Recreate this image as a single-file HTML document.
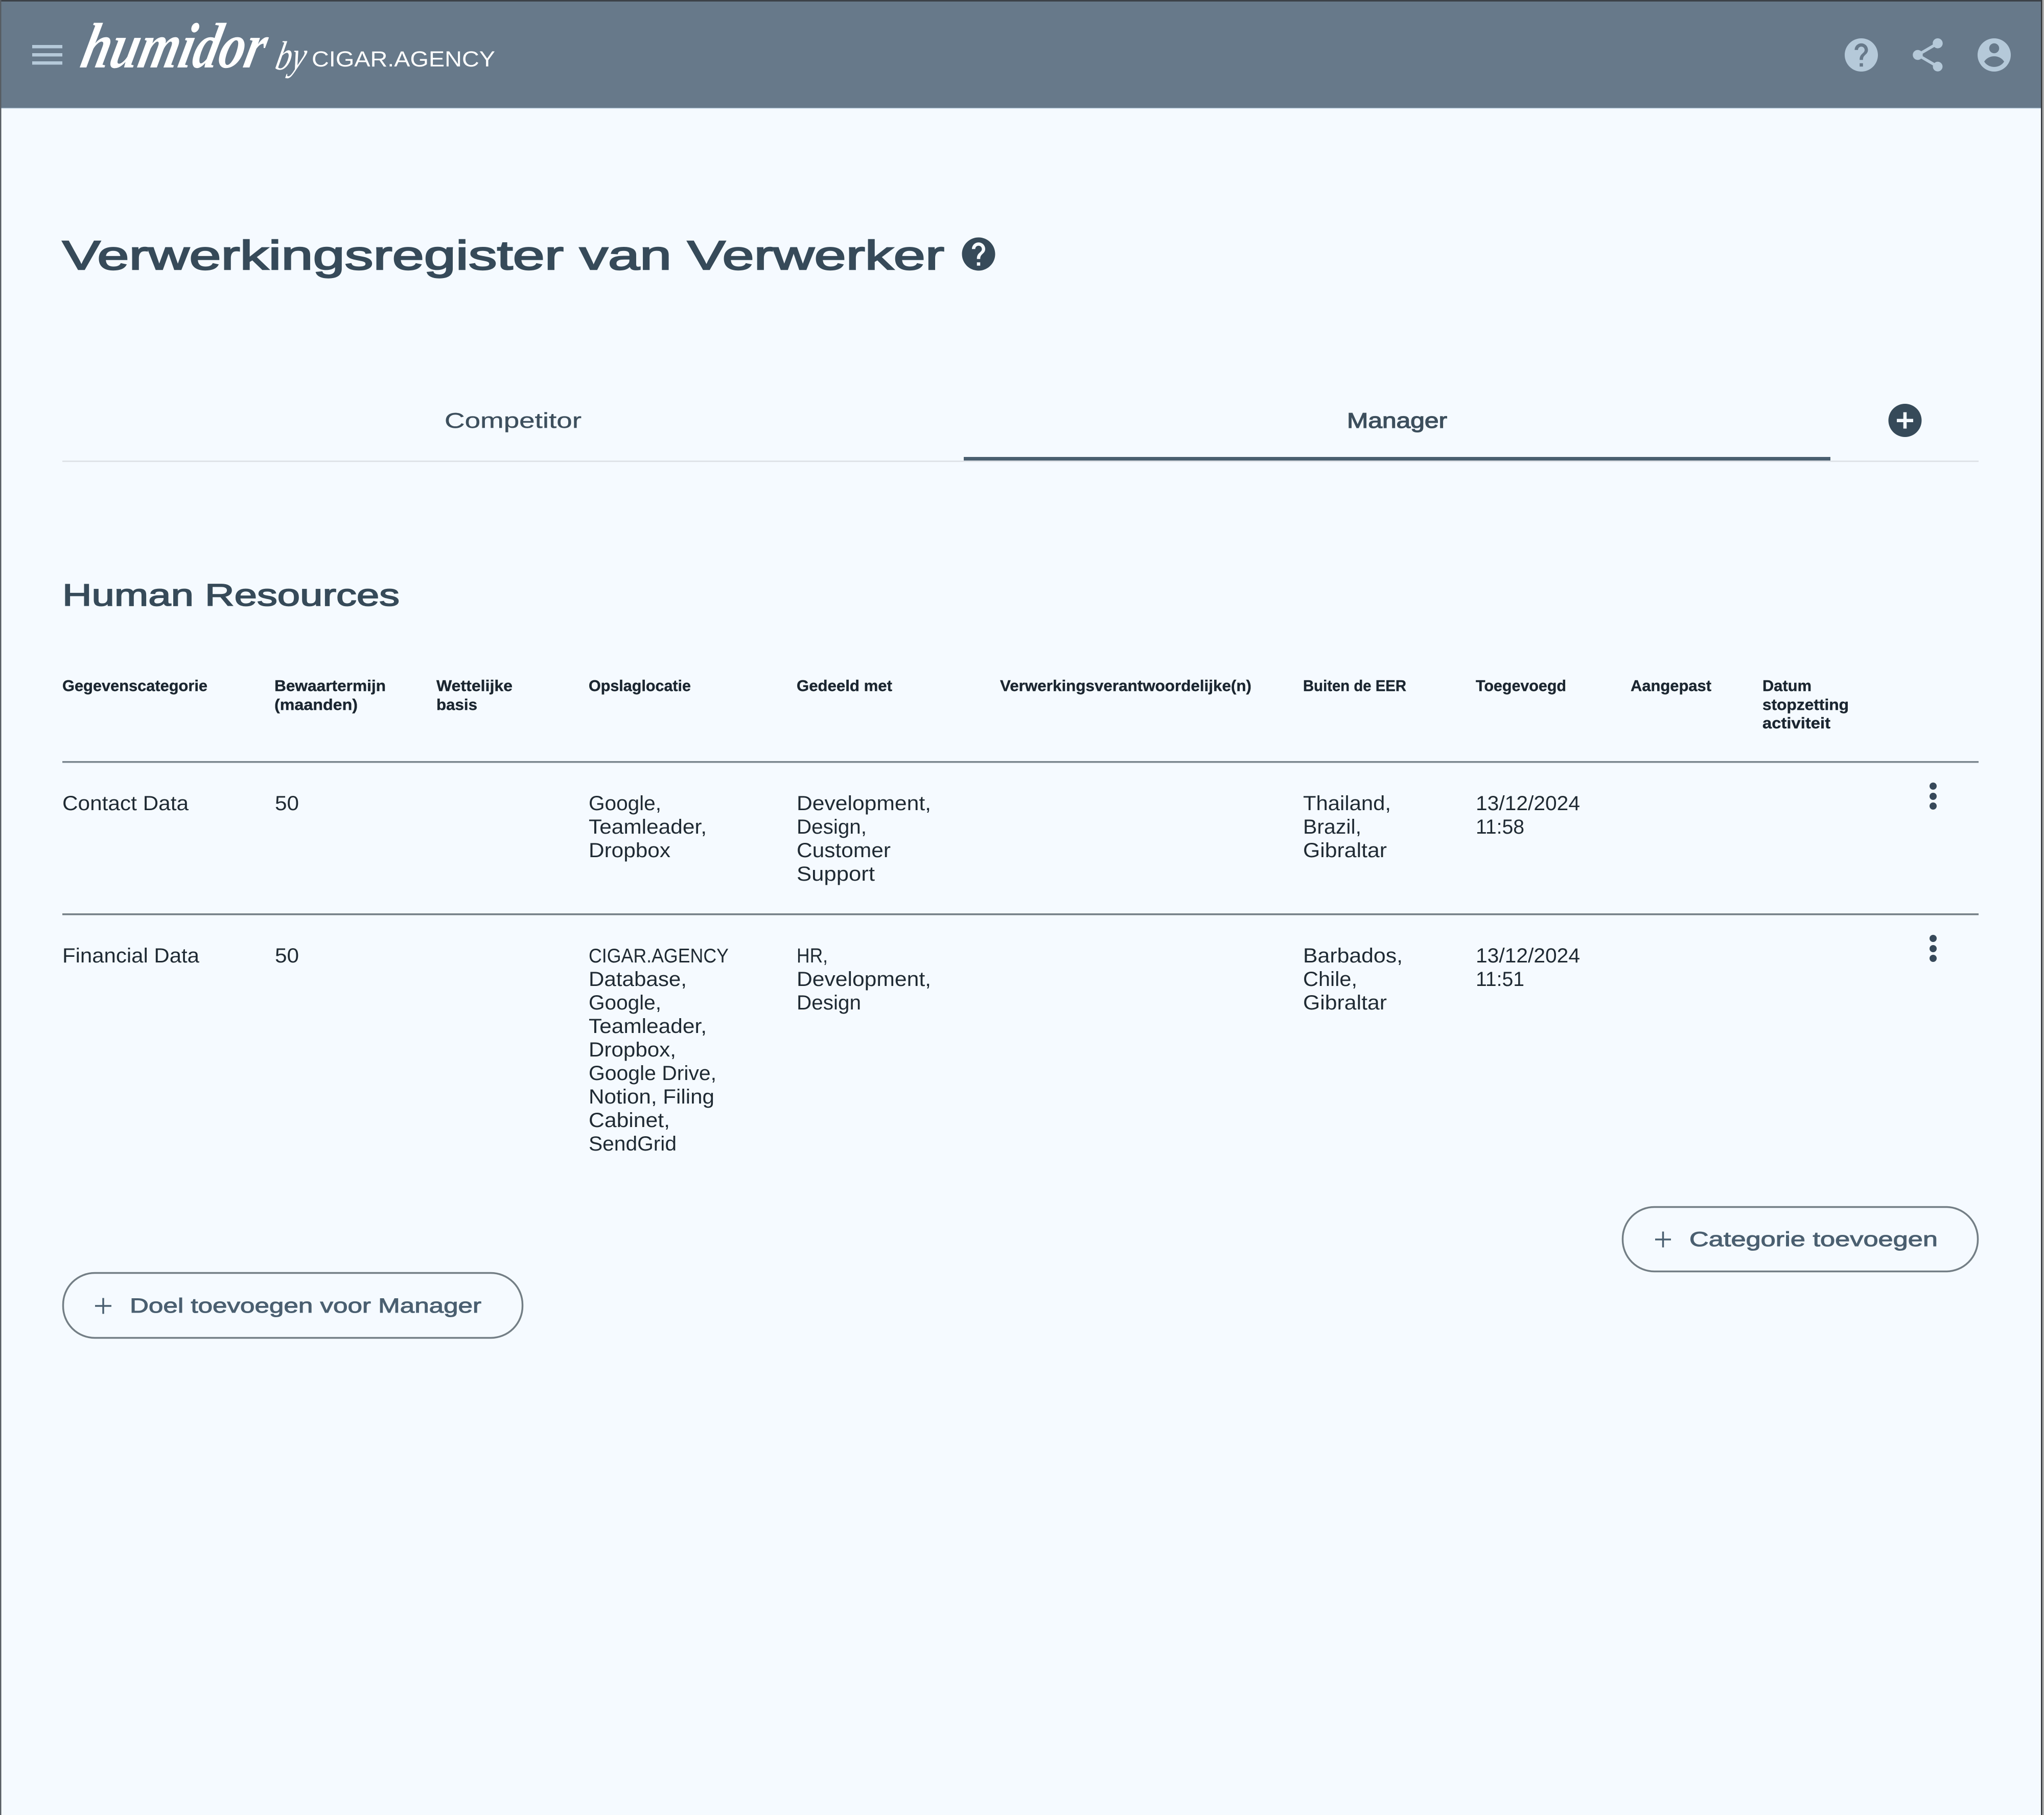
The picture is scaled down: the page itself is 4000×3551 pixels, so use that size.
<!DOCTYPE html>
<html lang="nl">
<head>
<meta charset="utf-8">
<title>Verwerkingsregister van Verwerker</title>
<style>
html,body{margin:0;padding:0;background:#f5faff;width:4000px;height:3551px;overflow:hidden}
svg{display:block}
text{font-family:"Liberation Sans",Arial,sans-serif;white-space:pre}
.th{font-size:31px;font-weight:700;fill:#1b2630;stroke:#1b2630;stroke-width:.4px}
.td{font-size:40px;fill:#1f2a33}
.btn{font-size:40px;fill:#4a5f70;stroke:#4a5f70;stroke-width:1px}
.pill{fill:none;stroke:#737e85;stroke-width:3.500px}
</style>
</head>
<body>
<svg width="4000" height="3551" viewBox="0 0 4000 3551" xmlns="http://www.w3.org/2000/svg">
  <rect width="4000" height="3551" fill="#f5faff"/>

  <!-- header -->
  <rect x="0" y="0" width="3994" height="211" fill="#67798a"/>
  <rect x="0" y="0" width="3994" height="3" fill="#3c4248"/>
  <rect x="0" y="211" width="3994" height="1.500" fill="#b5c9d9"/>
  <rect x="63" y="88" width="59" height="6.500" fill="#b5c9d9"/>
  <rect x="63" y="104" width="59" height="6.500" fill="#b5c9d9"/>
  <rect x="63" y="120" width="59" height="6.500" fill="#b5c9d9"/>

  <text transform="translate(154,132) skewX(-13)" style="font-family:'Liberation Serif',serif;font-size:126px;font-weight:700;font-style:italic" fill="#ffffff" textLength="358" lengthAdjust="spacingAndGlyphs">humidor</text>
  <text transform="translate(536,136) skewX(-12)" style="font-family:'Liberation Serif',serif;font-size:80px;font-style:italic" fill="#ffffff" textLength="58" lengthAdjust="spacingAndGlyphs">by</text>
  <text x="610" y="130" style="font-size:43px" fill="#ffffff" textLength="359" lengthAdjust="spacingAndGlyphs">CIGAR.AGENCY</text>

  <g fill="#b5c9d9">
    <path transform="translate(3603.500,68.500) scale(3.250)" d="M12 2C6.480 2 2 6.480 2 12s4.480 10 10 10 10-4.480 10-10S17.520 2 12 2zm1 17h-2v-2h2v2zm2.070-7.750l-.9.920C13.450 12.900 13 13.500 13 15h-2v-.5c0-1.100.45-2.100 1.170-2.830l1.240-1.260c.37-.36.59-.86.59-1.410 0-1.100-.9-2-2-2s-2 .9-2 2H8c0-2.210 1.790-4 4-4s4 1.790 4 4c0 .88-.36 1.680-.93 2.250z"/>
    <path transform="translate(3733.500,68.500) scale(3.250)" d="M18 16.080c-.76 0-1.440.3-1.960.77L8.910 12.700c.05-.23.09-.46.09-.7s-.04-.47-.09-.7l7.050-4.110c.54.5 1.250.81 2.040.81 1.660 0 3-1.340 3-3s-1.340-3-3-3-3 1.340-3 3c0 .24.04.47.09.7L8.040 9.810C7.500 9.310 6.790 9 6 9c-1.660 0-3 1.340-3 3s1.340 3 3 3c.79 0 1.500-.31 2.040-.81l7.120 4.160c-.05.21-.08.43-.08.65 0 1.610 1.310 2.920 2.920 2.920 1.610 0 2.920-1.310 2.920-2.920s-1.310-2.920-2.920-2.920z"/>
    <path transform="translate(3863.500,68.500) scale(3.250)" fill-rule="evenodd" d="M12 2a10 10 0 1 0 0 20a10 10 0 1 0 0-20zM12 5a3 3 0 1 1 0 6a3 3 0 1 1 0-6zM6 16c1.300-2.100 3.600-3.200 6-3.200s4.700 1.100 6 3.200c-1.300 2.100-3.600 3.200-6 3.200s-4.700-1.100-6-3.200z"/>
  </g>

  <!-- title -->
  <text x="122" y="527" style="font-size:80px" fill="#364a59" stroke="#364a59" stroke-width="2.400" textLength="1726" lengthAdjust="spacingAndGlyphs">Verwerkingsregister van Verwerker</text>
  <path fill="#364a59" transform="translate(1876,458) scale(3.250)" d="M12 2C6.480 2 2 6.480 2 12s4.480 10 10 10 10-4.480 10-10S17.520 2 12 2zm1 17h-2v-2h2v2zm2.070-7.750l-.9.920C13.450 12.900 13 13.500 13 15h-2v-.5c0-1.100.45-2.100 1.170-2.830l1.240-1.260c.37-.36.59-.86.59-1.410 0-1.100-.9-2-2-2s-2 .9-2 2H8c0-2.210 1.790-4 4-4s4 1.790 4 4c0 .88-.36 1.680-.93 2.250z"/>

  <!-- tabs -->
  <text x="870" y="837" style="font-size:42px" fill="#3d4f5d" stroke="#3d4f5d" stroke-width=".4" textLength="268" lengthAdjust="spacingAndGlyphs">Competitor</text>
  <text x="2636" y="837" style="font-size:42px" fill="#3d4f5d" stroke="#3d4f5d" stroke-width="1.300" textLength="196" lengthAdjust="spacingAndGlyphs">Manager</text>
  <rect x="122" y="901" width="3750" height="3" fill="#dfe3e8"/>
  <rect x="1886" y="894" width="1696" height="7" fill="#4a5f70"/>
  <circle cx="3728" cy="822.500" r="32.500" fill="#364a59"/>
  <rect x="3712" y="819.500" width="32" height="6.500" fill="#f5faff"/>
  <rect x="3724.700" y="806.500" width="6.500" height="32" fill="#f5faff"/>

  <!-- section heading -->
  <text x="122" y="1185" style="font-size:60px" fill="#364a59" stroke="#364a59" stroke-width="1.700" textLength="660" lengthAdjust="spacingAndGlyphs">Human Resources</text>

  <!-- table head -->
  <text class="th" x="122" y="1352" textLength="284" lengthAdjust="spacingAndGlyphs">Gegevenscategorie</text>
  <text class="th" x="537" y="1352" textLength="218" lengthAdjust="spacingAndGlyphs">Bewaartermijn</text>
  <text class="th" x="537" y="1389" textLength="163" lengthAdjust="spacingAndGlyphs">(maanden)</text>
  <text class="th" x="854" y="1352" textLength="149" lengthAdjust="spacingAndGlyphs">Wettelijke</text>
  <text class="th" x="854" y="1389" textLength="80" lengthAdjust="spacingAndGlyphs">basis</text>
  <text class="th" x="1152" y="1352" textLength="200" lengthAdjust="spacingAndGlyphs">Opslaglocatie</text>
  <text class="th" x="1559" y="1352" textLength="187" lengthAdjust="spacingAndGlyphs">Gedeeld met</text>
  <text class="th" x="1957" y="1352" textLength="492" lengthAdjust="spacingAndGlyphs">Verwerkingsverantwoordelijke(n)</text>
  <text class="th" x="2550" y="1352" textLength="202" lengthAdjust="spacingAndGlyphs">Buiten de EER</text>
  <text class="th" x="2888" y="1352" textLength="177" lengthAdjust="spacingAndGlyphs">Toegevoegd</text>
  <text class="th" x="3191" y="1352" textLength="158" lengthAdjust="spacingAndGlyphs">Aangepast</text>
  <text class="th" x="3449" y="1352" textLength="96" lengthAdjust="spacingAndGlyphs">Datum</text>
  <text class="th" x="3449" y="1389" textLength="169" lengthAdjust="spacingAndGlyphs">stopzetting</text>
  <text class="th" x="3449" y="1425" textLength="133" lengthAdjust="spacingAndGlyphs">activiteit</text>

  <rect x="122" y="1489" width="3750" height="3.500" fill="#7b868f"/>
  <rect x="122" y="1787" width="3750" height="3.500" fill="#737e85"/>

  <!-- row 1 -->
  <text class="td" x="122" y="1585" textLength="247" lengthAdjust="spacingAndGlyphs">Contact Data</text>
  <text class="td" x="538" y="1585" textLength="47" lengthAdjust="spacingAndGlyphs">50</text>
  <text class="td" x="1152" y="1585" textLength="142" lengthAdjust="spacingAndGlyphs">Google,</text>
  <text class="td" x="1152" y="1631" textLength="231" lengthAdjust="spacingAndGlyphs">Teamleader,</text>
  <text class="td" x="1152" y="1677" textLength="160" lengthAdjust="spacingAndGlyphs">Dropbox</text>
  <text class="td" x="1559" y="1585" textLength="263" lengthAdjust="spacingAndGlyphs">Development,</text>
  <text class="td" x="1559" y="1631" textLength="137" lengthAdjust="spacingAndGlyphs">Design,</text>
  <text class="td" x="1559" y="1677" textLength="184" lengthAdjust="spacingAndGlyphs">Customer</text>
  <text class="td" x="1559" y="1723" textLength="153" lengthAdjust="spacingAndGlyphs">Support</text>
  <text class="td" x="2550" y="1585" textLength="172" lengthAdjust="spacingAndGlyphs">Thailand,</text>
  <text class="td" x="2550" y="1631" textLength="114" lengthAdjust="spacingAndGlyphs">Brazil,</text>
  <text class="td" x="2550" y="1677" textLength="164" lengthAdjust="spacingAndGlyphs">Gibraltar</text>
  <text class="td" x="2888" y="1585" textLength="204" lengthAdjust="spacingAndGlyphs">13/12/2024</text>
  <text class="td" x="2888" y="1631" textLength="95" lengthAdjust="spacingAndGlyphs">11:58</text>
  <g fill="#37495a">
    <circle cx="3783" cy="1538" r="7"/><circle cx="3783" cy="1558" r="7"/><circle cx="3783" cy="1577" r="7"/>
  </g>

  <!-- row 2 -->
  <text class="td" x="122" y="1883" textLength="268" lengthAdjust="spacingAndGlyphs">Financial Data</text>
  <text class="td" x="538" y="1883" textLength="47" lengthAdjust="spacingAndGlyphs">50</text>
  <text class="td" x="1152" y="1883" style="font-size:39px" textLength="274" lengthAdjust="spacingAndGlyphs">CIGAR.AGENCY</text>
  <text class="td" x="1152" y="1929" textLength="192" lengthAdjust="spacingAndGlyphs">Database,</text>
  <text class="td" x="1152" y="1975" textLength="142" lengthAdjust="spacingAndGlyphs">Google,</text>
  <text class="td" x="1152" y="2021" textLength="231" lengthAdjust="spacingAndGlyphs">Teamleader,</text>
  <text class="td" x="1152" y="2067" textLength="171" lengthAdjust="spacingAndGlyphs">Dropbox,</text>
  <text class="td" x="1152" y="2113" textLength="250" lengthAdjust="spacingAndGlyphs">Google Drive,</text>
  <text class="td" x="1152" y="2159" textLength="246" lengthAdjust="spacingAndGlyphs">Notion, Filing</text>
  <text class="td" x="1152" y="2205" textLength="159" lengthAdjust="spacingAndGlyphs">Cabinet,</text>
  <text class="td" x="1152" y="2251" textLength="172" lengthAdjust="spacingAndGlyphs">SendGrid</text>
  <text class="td" x="1559" y="1883" textLength="61" lengthAdjust="spacingAndGlyphs">HR,</text>
  <text class="td" x="1559" y="1929" textLength="263" lengthAdjust="spacingAndGlyphs">Development,</text>
  <text class="td" x="1559" y="1975" textLength="126" lengthAdjust="spacingAndGlyphs">Design</text>
  <text class="td" x="2550" y="1883" textLength="195" lengthAdjust="spacingAndGlyphs">Barbados,</text>
  <text class="td" x="2550" y="1929" textLength="106" lengthAdjust="spacingAndGlyphs">Chile,</text>
  <text class="td" x="2550" y="1975" textLength="164" lengthAdjust="spacingAndGlyphs">Gibraltar</text>
  <text class="td" x="2888" y="1883" textLength="204" lengthAdjust="spacingAndGlyphs">13/12/2024</text>
  <text class="td" x="2888" y="1929" textLength="95" lengthAdjust="spacingAndGlyphs">11:51</text>
  <g fill="#37495a">
    <circle cx="3783" cy="1836" r="7"/><circle cx="3783" cy="1856" r="7"/><circle cx="3783" cy="1875" r="7"/>
  </g>

  <!-- buttons -->
  <rect class="pill" x="3175.500" y="2361.500" width="695" height="126" rx="62" ry="62"/>
  <path d="M3239 2425h31M3254.500 2409.500v31" stroke="#4a5f70" stroke-width="3.500" fill="none"/>
  <text class="btn" x="3306" y="2438" textLength="486" lengthAdjust="spacingAndGlyphs">Categorie toevoegen</text>

  <rect class="pill" x="123.500" y="2490.500" width="899" height="127" rx="62" ry="62"/>
  <path d="M186 2555h32M202 2539.500v31" stroke="#4a5f70" stroke-width="3.500" fill="none"/>
  <text class="btn" x="254" y="2568" textLength="688" lengthAdjust="spacingAndGlyphs">Doel toevoegen voor Manager</text>

  <!-- window edges -->
  <rect x="0" y="0" width="2.500" height="3551" fill="#565c62"/>
  <rect x="3994" y="0" width="2.500" height="3551" fill="#2e3236"/>
  <rect x="3996.500" y="0" width="3.500" height="3551" fill="#ababab"/>
</svg>
</body>
</html>
